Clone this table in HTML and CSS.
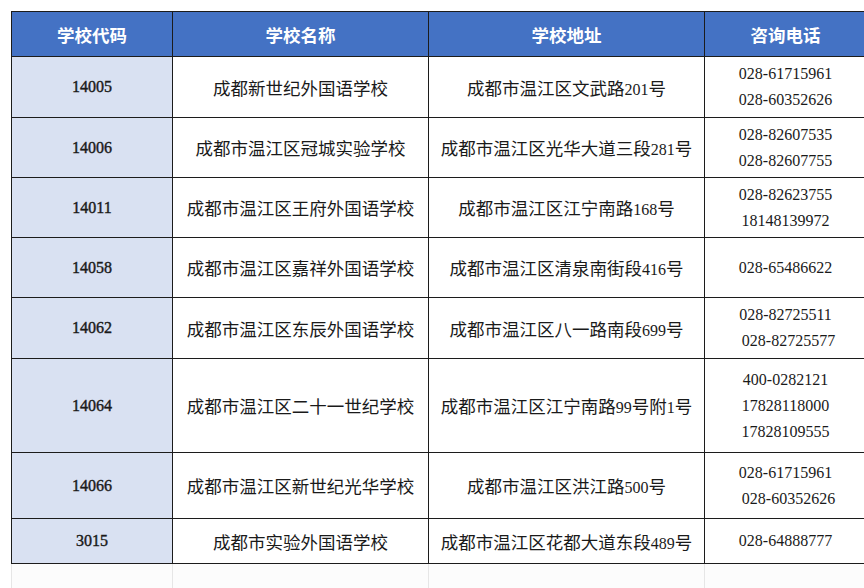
FILE: index.html
```html
<!DOCTYPE html>
<html lang="zh-CN">
<head>
<meta charset="utf-8">
<title>学校列表</title>
<link rel="stylesheet" href="styles.css">
</head>
<body>
<table class="schools">
  <colgroup>
    <col class="c-code"><col class="c-name"><col class="c-addr"><col class="c-tel">
  </colgroup>
  <thead>
    <tr class="head"><th>学校代码</th><th>学校名称</th><th>学校地址</th><th>咨询电话</th></tr>
  </thead>
  <tbody>
    <tr class="r61">
      <td class="code">14005</td><td>成都新世纪外国语学校</td><td>成都市温江区文武路<span class="num">201</span>号</td>
      <td class="tel"><div>028-61715961</div><div>028-60352626</div></td>
    </tr>
    <tr class="r60">
      <td class="code">14006</td><td>成都市温江区冠城实验学校</td><td>成都市温江区光华大道三段<span class="num">281</span>号</td>
      <td class="tel"><div>028-82607535</div><div>028-82607755</div></td>
    </tr>
    <tr class="r60">
      <td class="code">14011</td><td>成都市温江区王府外国语学校</td><td>成都市温江区江宁南路<span class="num">168</span>号</td>
      <td class="tel"><div>028-82623755</div><div>18148139972</div></td>
    </tr>
    <tr class="r60">
      <td class="code">14058</td><td>成都市温江区嘉祥外国语学校</td><td>成都市温江区清泉南街段<span class="num">416</span>号</td>
      <td class="tel"><div>028-65486622</div></td>
    </tr>
    <tr class="r61">
      <td class="code">14062</td><td>成都市温江区东辰外国语学校</td><td>成都市温江区八一路南段<span class="num">699</span>号</td>
      <td class="tel"><div>028-82725511</div><div class="shift">028-82725577</div></td>
    </tr>
    <tr class="r94">
      <td class="code">14064</td><td>成都市温江区二十一世纪学校</td><td>成都市温江区江宁南路<span class="num">99</span>号附<span class="num">1</span>号</td>
      <td class="tel"><div>400-0282121</div><div>17828118000</div><div>17828109555</div></td>
    </tr>
    <tr class="r66">
      <td class="code">14066</td><td>成都市温江区新世纪光华学校</td><td>成都市温江区洪江路<span class="num">500</span>号</td>
      <td class="tel"><div>028-61715961</div><div class="shift">028-60352626</div></td>
    </tr>
    <tr class="r45 last">
      <td class="code">3015</td><td>成都市实验外国语学校</td><td>成都市温江区花都大道东段<span class="num">489</span>号</td>
      <td class="tel"><div>028-64888777</div></td>
    </tr>
    <tr class="ghost">
      <td></td><td></td><td></td><td></td>
    </tr>
  </tbody>
</table>
</body>
</html>
```

FILE: styles.css
```css
html, body {
  margin: 0;
  padding: 0;
  overflow: hidden;
  background: #ffffff;
}

body {
  padding: 11px 0 0 11px;
  font-family: "Liberation Serif", "Noto Sans CJK SC", serif;
  color: #1a1a1a;
}

.schools {
  border-collapse: collapse;
  table-layout: fixed;
  width: 855px;
  font-size: 17.5px;
}

.c-code { width: 161px; }
.c-name { width: 256px; }
.c-addr { width: 276px; }
.c-tel { width: 162px; }

.schools th,
.schools td {
  border: 1px solid #1c1c1c;
  text-align: center;
  vertical-align: middle;
  padding: 0;
  white-space: nowrap;
}

.head th {
  height: 44px;
  background: #4472c4;
  color: #ffffff;
  font-weight: bold;
  font-size: 17.5px;
}

.code {
  background: #d9e1f2;
  font-size: 16px;
  color: #1a1a1a;
  -webkit-text-stroke: 0.4px #1a1a1a;
}

.num {
  font-size: 16px;
}

.tel {
  font-size: 16px;
  line-height: 26px;
}

.tel .shift {
  padding-left: 6px;
}

.r61 td { height: 60px; }
.r60 td { height: 59px; }
.r94 td { height: 93px; }
.r66 td { height: 65px; }
.r45 td { height: 44px; }

.ghost td {
  height: 24px;
  border: 1px solid #e6e6e6;
  border-top: none;
  background: #fcfcfc;
}
```
